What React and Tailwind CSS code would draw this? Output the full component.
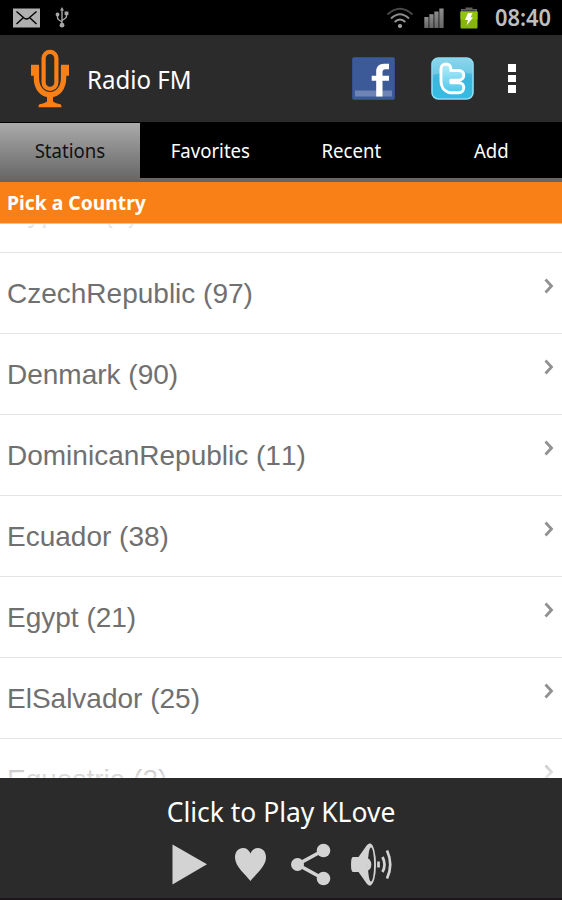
import React from "react";

const tabs = [
  { label: "Favorites", fit: "scale-x-[0.93]" },
  { label: "Recent", fit: "scale-x-[0.93]" },
  { label: "Add", fit: "scale-x-[0.93]" },
];

const countries = [
  "Cyprus (4)",
  "CzechRepublic (97)",
  "Denmark (90)",
  "DominicanRepublic (11)",
  "Ecuador (38)",
  "Egypt (21)",
  "ElSalvador (25)",
  "Equestria (2)",
];

function StatusBar() {
  return (
    <div className="flex h-[35px] shrink-0 items-center bg-black">
      <svg className="ml-[13px] h-5 w-[27px]" viewBox="0 0 27 20">
        <rect x="0" y="0.5" width="27" height="19" fill="#b0b0b0" />
        <path d="M3.500 3.500 11 10q2.500 2 5 0l7.500-6.500M3.500 16 10 10M23.500 16 17 10" fill="none" stroke="#000" strokeWidth="1.400" />
      </svg>
      <svg className="ml-[15px] h-[21px] w-[14px]" viewBox="0 0 14 21" fill="none" stroke="#a6a6a6" strokeWidth="1.400">
        <path d="M7 3v15M2.500 8v2.500Q2.500 12 4 13l3 2M11.500 6.500v2.500Q11.500 10.500 10 11.500L7 13.500" />
        <path d="M7 0l2 3.500H5z" fill="#a6a6a6" stroke="none" />
        <circle cx="2.500" cy="7.500" r="1.900" fill="#a6a6a6" stroke="none" />
        <rect x="9.600" y="4.500" width="3.800" height="3.600" fill="#a6a6a6" stroke="none" />
        <circle cx="7" cy="18.200" r="2.400" fill="#a6a6a6" stroke="none" />
      </svg>
      <svg className="ml-[317px] h-[22px] w-[28px]" viewBox="0 0 28 22" fill="none">
        <path d="M1.500 7.500Q14-4 26.500 7.500" stroke="#4a4a4a" strokeWidth="2" />
        <path d="M5 11.500Q14 3 23 11.500" stroke="#8c8c8c" strokeWidth="2" />
        <path d="M8.700 15Q14 10 19.300 15" stroke="#9a9a9a" strokeWidth="2" />
        <circle cx="14" cy="19" r="2.100" fill="#a6a6a6" />
      </svg>
      <svg className="ml-[10px] h-5 w-5" viewBox="0 0 20 20">
        <defs>
          <linearGradient id="signal" x1="0" x2="0" y1="0" y2="1">
            <stop offset="0" stopColor="#8e8e8e" />
            <stop offset="1" stopColor="#666" />
          </linearGradient>
        </defs>
        <g fill="url(#signal)">
          <rect x="0.300" y="9" width="4.300" height="11" />
          <rect x="5.300" y="6.200" width="4.300" height="13.800" />
          <rect x="10.300" y="3.500" width="4.300" height="16.500" />
          <rect x="15.300" y="0.500" width="4.300" height="19.500" />
        </g>
      </svg>
      <svg className="ml-[16px] h-[22px] w-[18px]" viewBox="0 0 18 22">
        <path d="M1 5V2h4.500V.5h7V2H17v3z" fill="#606060" />
        <path d="M2.500 5V3.500h13V5z" fill="#222" />
        <rect x="0.500" y="4.500" width="17" height="17" rx="1" fill="#86b50b" />
        <rect x="0.500" y="4.500" width="17" height="8" fill="#93c40c" />
        <path d="M8 6h4.500l-2 4.500H13l-6.500 8 1.500-5.500H5z" fill="#fff" />
      </svg>
      <span className="ml-[17px] origin-left scale-x-[0.95] whitespace-nowrap text-[23px] font-semibold leading-[35px] text-[#bebebe]">
        08:40
      </span>
    </div>
  );
}

function Microphone() {
  return (
    <svg className="ml-[30px] h-[60px] w-10" viewBox="0 0 40 60" fill="none" stroke="#f98016">
      <rect x="13.600" y="2.800" width="12.800" height="37" rx="6.400" strokeWidth="4.200" />
      <path d="M6.400 17V28.500C6.400 39 12 45.700 20 45.700S33.600 39 33.600 28.500V17" strokeWidth="5.400" />
      <path d="M1 15.800h8v11H1zM31 15.800h8v11h-8z" fill="#f98016" stroke="none" />
      <path d="M17 46v6.500Q14.500 54.500 9.500 55.200q-1 .5-1 3h23q0-2.500-1-3-5-.7-7.500-2.700V46z" fill="#f98016" stroke="none" />
    </svg>
  );
}

function Facebook() {
  return (
    <svg className="h-[43px] w-[43px]" viewBox="0 0 43 43">
      <rect x="0.500" y="0.500" width="42" height="42" rx="1.500" fill="#3c5a98" stroke="#34508c" />
      <rect x="3" y="33.500" width="37" height="6" fill="#6d84b4" />
      <path d="M24.200 39.500V23.800h-4.500v-5h4.500v-4.300C24.200 9.500 27 6.700 32 6.700h5v5.500h-3.500q-3 0-3 3v3.600h6.500v5h-6.500v15.700z" fill="#fff" />
    </svg>
  );
}

function Twitter() {
  return (
    <svg className="h-[43px] w-[43px]" viewBox="0 0 43 43">
      <defs>
        <linearGradient id="sky" x1="0" x2="0" y1="0" y2="1">
          <stop offset="0" stopColor="#6ccbe6" />
          <stop offset="0.500" stopColor="#3cb6dc" />
          <stop offset="1" stopColor="#35bce4" />
        </linearGradient>
        <linearGradient id="letter" x1="0" x2="0" y1="0" y2="1">
          <stop offset="0" stopColor="#b9ecf8" />
          <stop offset="1" stopColor="#4ac8ec" />
        </linearGradient>
      </defs>
      <rect x="1" y="1" width="41" height="41" rx="6.500" fill="url(#sky)" stroke="#8bdcf2" strokeWidth="1.600" />
      <path d="M1.800 8Q1.800 1.800 8 1.800h27Q41.200 1.800 41.200 8v9Q22 12 1.800 18z" fill="#fff" opacity="0.220" />
      <path
        d="M15 7c3 0 4.800 2 4.800 4.800v1.700h8c3 0 5 2 5 4.800s-2 4.900-5 4.900h-8v2.600h8c3 0 5 2 5 4.800s-2 5.200-5 5.200H22c-7.500 0-12-4.500-12-12v-12C10 9 12 7 15 7z"
        fill="url(#letter)"
        stroke="#fff"
        strokeWidth="2.900"
        strokeLinejoin="round"
      />
    </svg>
  );
}

function Header() {
  return (
    <div className="flex h-[88px] shrink-0 items-center border-b border-black bg-[#2b2b2b]">
      <Microphone />
      <h1 className="ml-[17px] w-[110px] origin-left scale-x-[0.925] whitespace-nowrap text-[26px] leading-none text-white">
        Radio FM
      </h1>
      <div className="ml-[155px] flex items-center gap-9">
        <Facebook />
        <Twitter />
      </div>
      <div className="ml-[34px] flex flex-col gap-[3px]">
        <i className="size-[7.500px] bg-white" />
        <i className="size-[7.500px] bg-white" />
        <i className="size-[7.500px] bg-white" />
      </div>
    </div>
  );
}

function Tabs() {
  return (
    <div className="flex h-[59px] shrink-0 bg-gradient-to-b from-[#ababab] to-[#646464] text-[20px] leading-[56px]">
      <div className="w-[140px] text-center text-[#111]">
        <span className="inline-block scale-x-[0.93]">Stations</span>
      </div>
      <div className="grid h-[55px] w-[422px] grid-cols-3 bg-black text-center text-white">
        {tabs.map((t) => (
          <span key={t.label} className={t.fit}>{t.label}</span>
        ))}
      </div>
    </div>
  );
}

function StationList() {
  return (
    <div className="relative h-[555px] shrink-0 overflow-hidden border-t border-[#fcc08b] bg-white">
      <ul className="-mt-[52px] font-['Liberation_Sans',sans-serif] [font-kerning:none]">
        {countries.map((c) => (
          <li key={c} className="flex h-[81px] items-center justify-between border-b border-[#e4e4e4] pl-[7px] pr-[8px] text-[28px] text-[#707070]">
            <span className="pt-[2px]">{c}</span>
            <svg className="mb-[15px] h-4 w-[10px]" viewBox="0 0 10 16" fill="none">
              <path d="M1.500 1.500 7.500 8l-6 6.500" stroke="#919191" strokeWidth="2.800" />
            </svg>
          </li>
        ))}
      </ul>
      <div className="absolute inset-x-0 top-0 h-7 bg-gradient-to-b from-white/90 to-transparent" />
      <div className="absolute inset-x-0 bottom-0 h-10 bg-gradient-to-t from-white/80 to-transparent" />
    </div>
  );
}

function Player() {
  return (
    <div className="flex h-[122px] shrink-0 flex-col items-center border-b-2 border-[#1c1519] bg-[#2b2b2b]">
      <h2 className="mt-[14px] origin-center scale-x-[0.945] whitespace-nowrap text-[28px] leading-[38px] text-white">
        Click to Play KLove
      </h2>
      <svg className="mt-[11px] h-[46px] w-[224px]" viewBox="0 0 224 46" fill="#d3d3d3">
        <path d="M3.500 3.500v40L38 23.200z" />
        <path d="M81.500 40C77 34 66 25.500 66 16.500c0-6 3.500-9.500 8-9.500 3.500 0 6 2 7.500 5.500C83 9 85.500 7 89 7c4.500 0 8 3.500 8 9.500 0 9-11 17.500-15.500 23.500z" />
        <path d="M154 9.500 128.500 23.500 154 37.500" fill="none" stroke="#d3d3d3" strokeWidth="3.600" />
        <circle cx="154.500" cy="9.500" r="6.800" />
        <circle cx="128.500" cy="23.500" r="6.500" />
        <circle cx="154.500" cy="37.500" r="6.800" />
        <path d="M184 16h5.500l8.500-12q1.500-1.500 3.500-1.500v42q-2 0-3.500-1.500l-8.500-12H184q-2 0-2-7.500t2-7.500z" />
        <ellipse cx="201" cy="23.500" rx="6" ry="21" />
        <ellipse cx="202" cy="23.500" rx="3.100" ry="17" fill="#2b2b2b" />
        <path d="M198.500 17q3.800 2 3.800 6.500t-3.800 6.500z" />
        <g fill="none" stroke="#d3d3d3" strokeWidth="2.700">
          <path d="M209.500 20.500v6M213.500 16q4 7.500 0 15M218 9.500q6.500 14 0 28" />
        </g>
      </svg>
    </div>
  );
}

export default function App() {
  return (
    <main className="flex h-[900px] w-[562px] flex-col overflow-hidden bg-black font-['Noto_Sans',sans-serif]">
      <StatusBar />
      <Header />
      <Tabs />
      <div className="h-[41px] shrink-0 bg-[#f98016] pl-[7px] text-[20px] font-bold leading-[42px] text-white">
        <span className="inline-block origin-left scale-x-[0.965]">Pick a Country</span>
      </div>
      <StationList />
      <Player />
    </main>
  );
}
